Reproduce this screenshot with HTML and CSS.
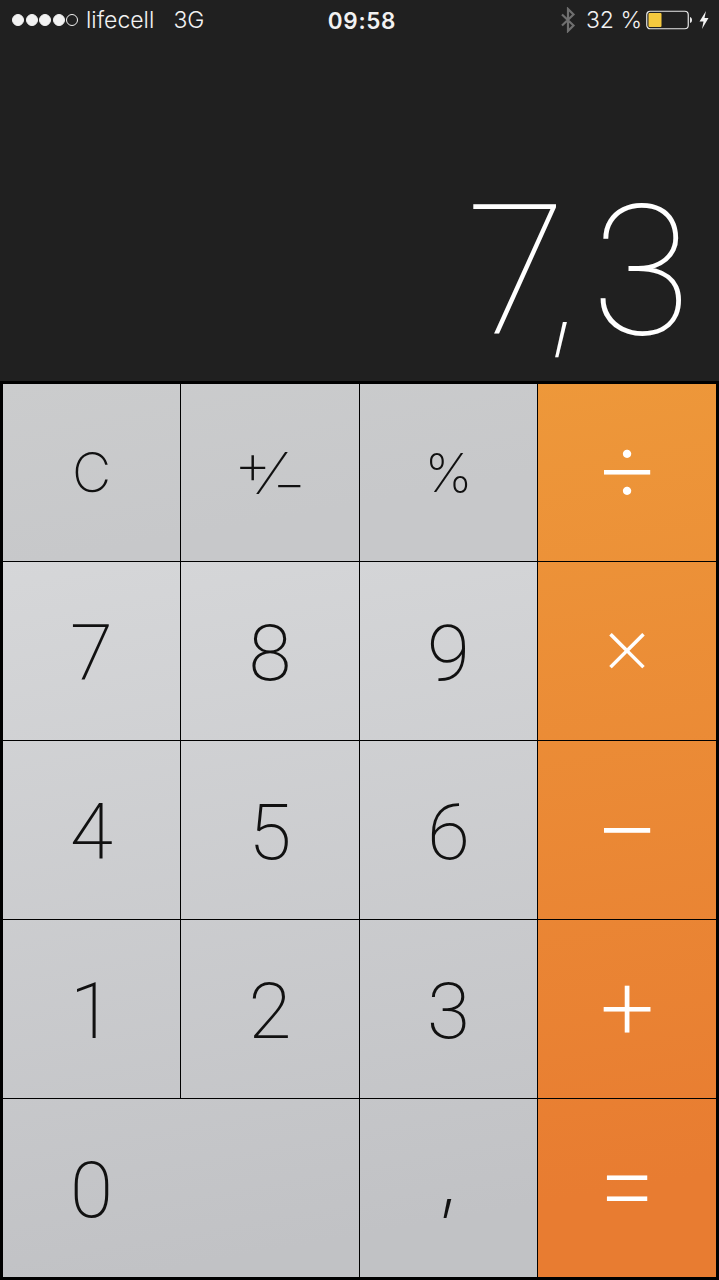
FILE: index.html
```html
<!DOCTYPE html>
<html lang="en">
<head>
  <meta charset="UTF-8" />
  <meta name="viewport" content="width=device-width, initial-scale=1" />
  <title>Calculator</title>
  <link rel="stylesheet" href="styles.css">
</head>
<body>

<div class="screen">
  <div class="status-bar">
    <div class="status-left">
      <div class="signal">
        <span class="dot"></span>
        <span class="dot"></span>
        <span class="dot"></span>
        <span class="dot"></span>
        <span class="dot empty"></span>
      </div>
      <span class="carrier">lifecell</span>
      <span class="network">3G</span>
    </div>
    <div class="status-time">09:58</div>
    <div class="status-right">
      <svg class="bt-icon" width="16" height="26" viewBox="0 0 16 26">
        <path d="M2 7.5 L13.5 18.5 L8 24 V2 L13.5 7.5 L2 18.5" fill="none" stroke="#6f6f6f" stroke-width="2.2" />
      </svg>
      <span class="battery-text">32 %</span>
      <svg class="battery" width="46" height="20" viewBox="0 0 46 20">
        <rect x="0.75" y="1.25" width="41.5" height="17.5" rx="3.5" fill="none" stroke="#e8e8e8" stroke-width="1.2" />
        <rect x="2.5" y="3" width="13" height="14" rx="1" fill="#f5c93e" />
        <path d="M44 7 C45.5 7.5 46 8.5 46 10 C46 11.5 45.5 12.5 44 13 Z" fill="#e8e8e8" />
      </svg>
      <svg class="bolt" width="10" height="20" viewBox="0 0 10 20">
        <path d="M7 1 L0.5 11.5 H4.5 L3 19 L9.5 8 H5.5 Z" fill="#f2f2f2" />
      </svg>
    </div>
  </div>

  <div class="display"><span class="display-num">7<span class="display-comma">,</span>3</span></div>

  <div class="keypad">
    <button class="key fn">C</button>
    <button class="key fn sign"><span class="sign-plus">+</span><span class="sign-slash">⁄</span><span class="sign-minus">−</span></button>
    <button class="key fn percent">%</button>
    <button class="key op">÷</button>

    <button class="key">7</button>
    <button class="key">8</button>
    <button class="key">9</button>
    <button class="key op times">×</button>

    <button class="key">4</button>
    <button class="key">5</button>
    <button class="key">6</button>
    <button class="key op">−</button>

    <button class="key">1</button>
    <button class="key">2</button>
    <button class="key">3</button>
    <button class="key op">+</button>

    <button class="key zero"><span class="zero-num">0</span></button>
    <button class="key comma">,</button>
    <button class="key op">=</button>
  </div>
</div>

</body>
</html>
```

FILE: styles.css
```css
* { box-sizing: border-box; }

body {
  margin: 0;
  background: #000;
  font-family: Inter, "Liberation Sans", sans-serif;
}

.screen {
  width: 719px;
  height: 1280px;
  display: flex;
  flex-direction: column;
  background: #202020;
}

/* status bar */
.status-bar {
  height: 40px;
  padding: 0 10px 0 12px;
  display: grid;
  grid-template-columns: 1fr auto 1fr;
  align-items: center;
  color: #f2f2f2;
  font-size: 23px;
}
.status-left { display: flex; align-items: center; }
.signal { display: flex; gap: 1.5px; margin-right: 8px; }
.dot {
  width: 12px;
  height: 12px;
  border-radius: 50%;
  background: #f2f2f2;
  border: 1px solid #f2f2f2;
}
.dot.empty { background: none; }
.carrier { font-weight: 300; margin-right: 19px; }
.network { font-weight: 300; }
.status-time { font-weight: 600; font-size: 22.5px; letter-spacing: 0.7px; margin-left: 3px; }
.status-right { display: flex; align-items: center; justify-content: flex-end; }
.bt-icon { margin-right: 10px; }
.battery-text { font-weight: 300; margin-right: 4px; }
.battery { margin-right: 7px; }

/* result */
.display {
  flex: 1;
  display: flex;
  justify-content: flex-end;
  align-items: flex-end;
  padding-right: 28px;
  overflow: hidden;
}
.display-num {
  color: #fff;
  font-family: Roboto, Inter, sans-serif;
  font-size: 182px;
  font-weight: 100;
  line-height: 1;
  margin-bottom: 18px;
}
.display-comma {
  font-family: Inter, sans-serif;
  font-size: 160px;
  margin: 0 6px 0 -24px;
}

/* buttons */
.keypad {
  flex: none;
  height: 899px;
  padding: 3px;
  display: grid;
  grid-template-columns: 177px 178px 177px 178px;
  grid-template-rows: 177px repeat(4, 178px);
  gap: 1px;
  background: #000;
}
.key {
  border: none;
  padding: 4px 0 0;
  display: flex;
  align-items: center;
  justify-content: center;
  font-family: Roboto, Inter, sans-serif;
  font-size: 78px;
  font-weight: 170;
  color: #111;
  background-attachment: fixed;
  background-image: linear-gradient(170deg, #d6d7d9 540px, #c1c2c5 1280px);
}
.key.fn {
  padding: 0;
  font-family: Inter, sans-serif;
  font-size: 54px;
  font-weight: 150;
  background-image: linear-gradient(170deg, #cbcccd 380px, #c7c8ca 560px);
}
.key.op {
  color: #fff;
  font-family: Inter, sans-serif;
  font-size: 108px;
  font-weight: 150;
  padding: 0 0 18px;
  background-image: linear-gradient(170deg, #ee9b3b 380px, #e87c31 1280px);
}
.key.op.times { font-size: 82px; padding-bottom: 14px; }
.key.zero {
  grid-column: span 2;
  justify-content: flex-start;
}
.zero-num { width: 177px; text-align: center; }
.key.comma { font-family: Inter, sans-serif; font-size: 80px; padding: 0 0 24px; }

.sign-plus { font-size: 58px; line-height: 1; margin-bottom: 20px; }
.sign-slash { font-size: 58px; line-height: 1; margin: 0 -4px; }
.sign-minus { font-size: 52px; line-height: 1; margin-top: 20px; }
```
